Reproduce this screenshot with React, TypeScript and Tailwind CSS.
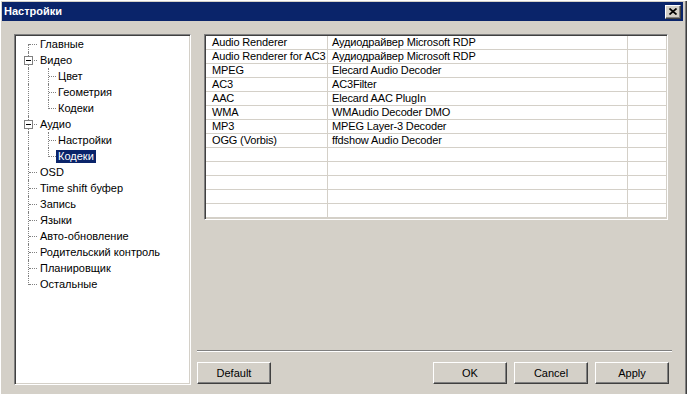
const font = { fontFamily: '"Liberation Sans", Arial, sans-serif' };

type Node = {
  label: string;
  level: 0 | 1;
  expanded?: boolean;
  first?: boolean;
  last?: boolean;
  selected?: boolean;
};

const tree: Node[] = [
  { label: 'Главные', level: 0, first: true },
  { label: 'Видео', level: 0, expanded: true },
  { label: 'Цвет', level: 1 },
  { label: 'Геометрия', level: 1 },
  { label: 'Кодеки', level: 1, last: true },
  { label: 'Аудио', level: 0, expanded: true },
  { label: 'Настройки', level: 1 },
  { label: 'Кодеки', level: 1, last: true, selected: true },
  { label: 'OSD', level: 0 },
  { label: 'Time shift буфер', level: 0 },
  { label: 'Запись', level: 0 },
  { label: 'Языки', level: 0 },
  { label: 'Авто-обновление', level: 0 },
  { label: 'Родительский контроль', level: 0 },
  { label: 'Планировщик', level: 0 },
  { label: 'Остальные', level: 0, last: true },
];

const codecs: [string, string][] = [
  ['Audio Renderer', 'Аудиодрайвер Microsoft RDP'],
  ['Audio Renderer for AC3', 'Аудиодрайвер Microsoft RDP'],
  ['MPEG', 'Elecard Audio Decoder'],
  ['AC3', 'AC3Filter'],
  ['AAC', 'Elecard AAC PlugIn'],
  ['WMA', 'WMAudio Decoder DMO'],
  ['MP3', 'MPEG Layer-3 Decoder'],
  ['OGG (Vorbis)', 'ffdshow Audio Decoder'],
  ['', ''],
  ['', ''],
  ['', ''],
  ['', ''],
  ['', ''],
];

const TreeRow = ({ node }: { node: Node }) => {
  const isRoot = node.level === 0;
  return (
    <div className="flex h-[16px] items-center">
      {/* root connector column */}
      <div className="relative h-[16px] w-[19px] shrink-0">
        {isRoot ? (
          <>
            <span
              className={`absolute left-[9px] border-l border-dotted border-[#808080] ${
                node.first ? 'top-[8px] bottom-0' : node.last ? 'top-0 h-[9px]' : 'top-0 bottom-0'
              }`}
            />
            <span className="absolute left-[10px] top-[8px] w-[8px] border-t border-dotted border-[#808080]" />
            {node.expanded && (
              <span className="absolute left-[5px] top-[4px] flex h-[9px] w-[9px] items-center justify-center border border-[#808080] bg-white">
                <span className="h-px w-[5px] bg-black" />
              </span>
            )}
          </>
        ) : (
          <span className="absolute left-[9px] top-0 bottom-0 border-l border-dotted border-[#808080]" />
        )}
      </div>
      {!isRoot && (
        <div className="relative h-[16px] w-[18px] shrink-0">
          <span
            className={`absolute left-[10px] top-0 border-l border-dotted border-[#808080] ${
              node.last ? 'h-[9px]' : 'bottom-0'
            }`}
          />
          <span className="absolute left-[11px] top-[8px] w-[7px] border-t border-dotted border-[#808080]" />
        </div>
      )}
      <span
        className={`h-[13px] whitespace-nowrap px-[2px] text-[11px] leading-[13px] ${
          node.selected ? 'bg-[#0a246a] text-white' : 'text-black'
        }`}
      >
        {node.label}
      </span>
    </div>
  );
};

const Button = ({ children, className = '' }: { children: string; className?: string }) => (
  <button
    type="button"
    className={`h-[22px] w-[74px] border border-b-[#404040] border-l-white border-r-[#404040] border-t-white bg-[#d4d0c8] text-[11px] text-black shadow-[inset_-1px_-1px_0_#808080] ${className}`}
  >
    {children}
  </button>
);

export default function App() {
  return (
    <div
      className="flex h-[394px] w-[687px] flex-col overflow-hidden bg-[#d4d0c8] pl-[2px] pr-[4px] pt-[2px] shadow-[inset_1px_1px_0_#fff,inset_-1px_0_0_#404040,inset_-2px_0_0_#808080]"
      style={font}
    >
      {/* title bar */}
      <div className="flex h-[19px] shrink-0 items-center bg-[#0a246a] pl-[2px] pr-[2px]">
        <span className="text-[11px] font-bold text-white">Настройки</span>
        <button
          type="button"
          className="ml-auto flex h-[14px] w-[16px] items-center justify-center border border-b-[#404040] border-l-white border-r-[#404040] border-t-white bg-[#d4d0c8] shadow-[inset_-1px_-1px_0_#808080]"
        >
          <svg width="8" height="7" viewBox="0 0 8 7">
            <path d="M0.5 0.5L7.5 6.5M7.5 0.5L0.5 6.5" stroke="#000" strokeWidth="1.7" />
          </svg>
        </button>
      </div>

      <div className="flex flex-1 pl-[12px] pt-[13px]">
        {/* tree */}
        <div className="h-[351px] w-[177px] shrink-0 border border-b-white border-l-[#808080] border-r-white border-t-[#808080] bg-white shadow-[inset_1px_1px_0_#404040,inset_-1px_-1px_0_#d4d0c8]">
          <div className="pl-[4px] pt-[1px]">
            {tree.map((n, i) => (
              <TreeRow key={i} node={n} />
            ))}
          </div>
        </div>

        {/* right column */}
        <div className="ml-[6px] flex w-[475px] flex-col">
          <div className="ml-[7px] h-[186px] w-[464px] border border-b-white border-l-[#808080] border-r-white border-t-[#808080] bg-white p-px shadow-[inset_1px_1px_0_#404040,inset_-1px_-1px_0_#d4d0c8]">
            {codecs.map(([name, filter], i) => (
              <div
                key={i}
                className="flex h-[14px] border-b border-[#d4d0c8] text-[11px] leading-[13px] tracking-[-0.15px] text-black"
              >
                <div className="w-[122px] shrink-0 whitespace-nowrap border-r border-[#d4d0c8] pl-[6px]">
                  {name}
                </div>
                <div className="w-[300px] shrink-0 whitespace-nowrap border-r border-[#d4d0c8] pl-[4px]">
                  {filter}
                </div>
                <div className="flex-1" />
              </div>
            ))}
          </div>

          <div className="mt-[130px] h-[2px] w-[475px] border-b border-t border-b-white border-t-[#808080]" />

          <div className="mt-[10px] flex pr-[3px]">
            <Button>Default</Button>
            <div className="ml-auto flex gap-[7px]">
              <Button>OK</Button>
              <Button>Cancel</Button>
              <Button>Apply</Button>
            </div>
          </div>
        </div>
      </div>
    </div>
  );
}
